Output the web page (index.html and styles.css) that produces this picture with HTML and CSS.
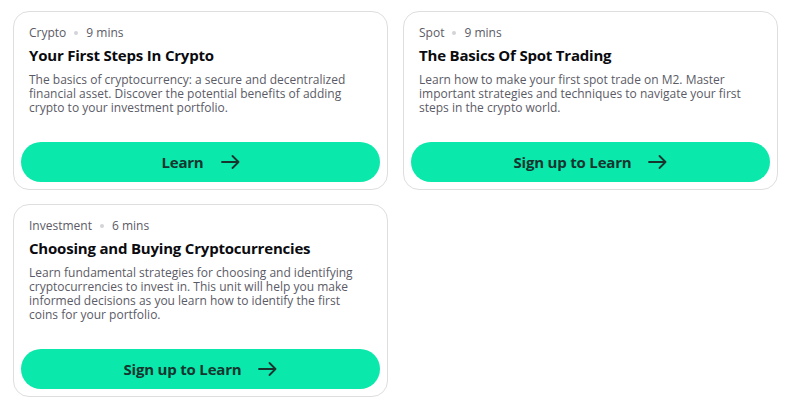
FILE: index.html
```html
<!DOCTYPE html>
<html lang="en">
<head>
  <meta charset="UTF-8" />
  <meta name="viewport" content="width=device-width, initial-scale=1" />
  <title>Academy - Courses</title>
  <link rel="stylesheet" href="styles.css">
</head>
<body>

  <div class="course-grid">

    <div class="course-card">
      <div class="course-info">
        <div class="course-meta">
          <span>Crypto</span><span class="dot"></span><span>9 mins</span>
        </div>
        <h2 class="course-title">Your First Steps In Crypto</h2>
        <p class="course-desc">The basics of cryptocurrency: a secure and decentralized financial asset. Discover the potential benefits of adding crypto to your investment portfolio.</p>
      </div>
      <a class="course-btn" href="#">
        Learn
        <svg width="19" height="14" viewBox="0 0 19 14"><path d="M1 7h16.5M11.5 1l6 6-6 6" /></svg>
      </a>
    </div>

    <div class="course-card">
      <div class="course-info">
        <div class="course-meta">
          <span>Spot</span><span class="dot"></span><span>9 mins</span>
        </div>
        <h2 class="course-title">The Basics Of Spot Trading</h2>
        <p class="course-desc">Learn how to make your first spot trade on M2. Master important strategies and techniques to navigate your first steps in the crypto world.</p>
      </div>
      <a class="course-btn" href="#">
        Sign up to Learn
        <svg width="19" height="14" viewBox="0 0 19 14"><path d="M1 7h16.5M11.5 1l6 6-6 6" /></svg>
      </a>
    </div>

    <div class="course-card">
      <div class="course-info">
        <div class="course-meta">
          <span>Investment</span><span class="dot"></span><span>6 mins</span>
        </div>
        <h2 class="course-title">Choosing and Buying Cryptocurrencies</h2>
        <p class="course-desc">Learn fundamental strategies for choosing and identifying cryptocurrencies to invest in. This unit will help you make informed decisions as you learn how to identify the first coins for your portfolio.</p>
      </div>
      <a class="course-btn" href="#">
        Sign up to Learn
        <svg width="19" height="14" viewBox="0 0 19 14"><path d="M1 7h16.5M11.5 1l6 6-6 6" /></svg>
      </a>
    </div>

  </div>

</body>
</html>
```

FILE: styles.css
```css
:root {
  --card-border: #dedede;
  --text-dark: #0b0b0f;
  --text-muted: #5b5b66;
  --accent: #0ae8ab;
  --accent-text: #16352f;
  --font-main: 'Open Sans', 'Liberation Sans', sans-serif;
}

body {
  margin: 0;
  padding: 11px 13px;
  font-family: var(--font-main);
  background: #ffffff;
}

.course-grid {
  display: grid;
  grid-template-columns: 375px 375px;
  gap: 14px 15px;
  align-items: start;
}

.course-card {
  border: 1px solid var(--card-border);
  border-radius: 16px;
  padding: 12px 7px 7px;
  display: flex;
  flex-direction: column;
}

.course-info {
  padding: 0 8px;
}

.course-meta {
  display: flex;
  align-items: center;
  font-size: 12px;
  line-height: 18px;
  color: var(--text-muted);
}

.course-meta .dot {
  width: 4px;
  height: 4px;
  border-radius: 50%;
  background: #d4d4d8;
  margin: 0 8px;
}

.course-title {
  margin: 2px 0 0;
  font-size: 15px;
  line-height: 22px;
  font-weight: 700;
  letter-spacing: -0.2px;
  color: var(--text-dark);
}

.course-desc {
  margin: 7px 0 0;
  font-size: 12px;
  line-height: 14px;
  color: var(--text-muted);
}

.course-btn {
  margin-top: 27px;
  height: 40px;
  border-radius: 20px;
  background: var(--accent);
  color: var(--accent-text);
  display: flex;
  align-items: center;
  justify-content: center;
  gap: 17px;
  font-size: 15px;
  font-weight: 700;
  letter-spacing: -0.2px;
  text-decoration: none;
}

.course-btn svg {
  fill: none;
  stroke: var(--accent-text);
  stroke-width: 1.8;
  stroke-linecap: round;
  stroke-linejoin: round;
}
```
